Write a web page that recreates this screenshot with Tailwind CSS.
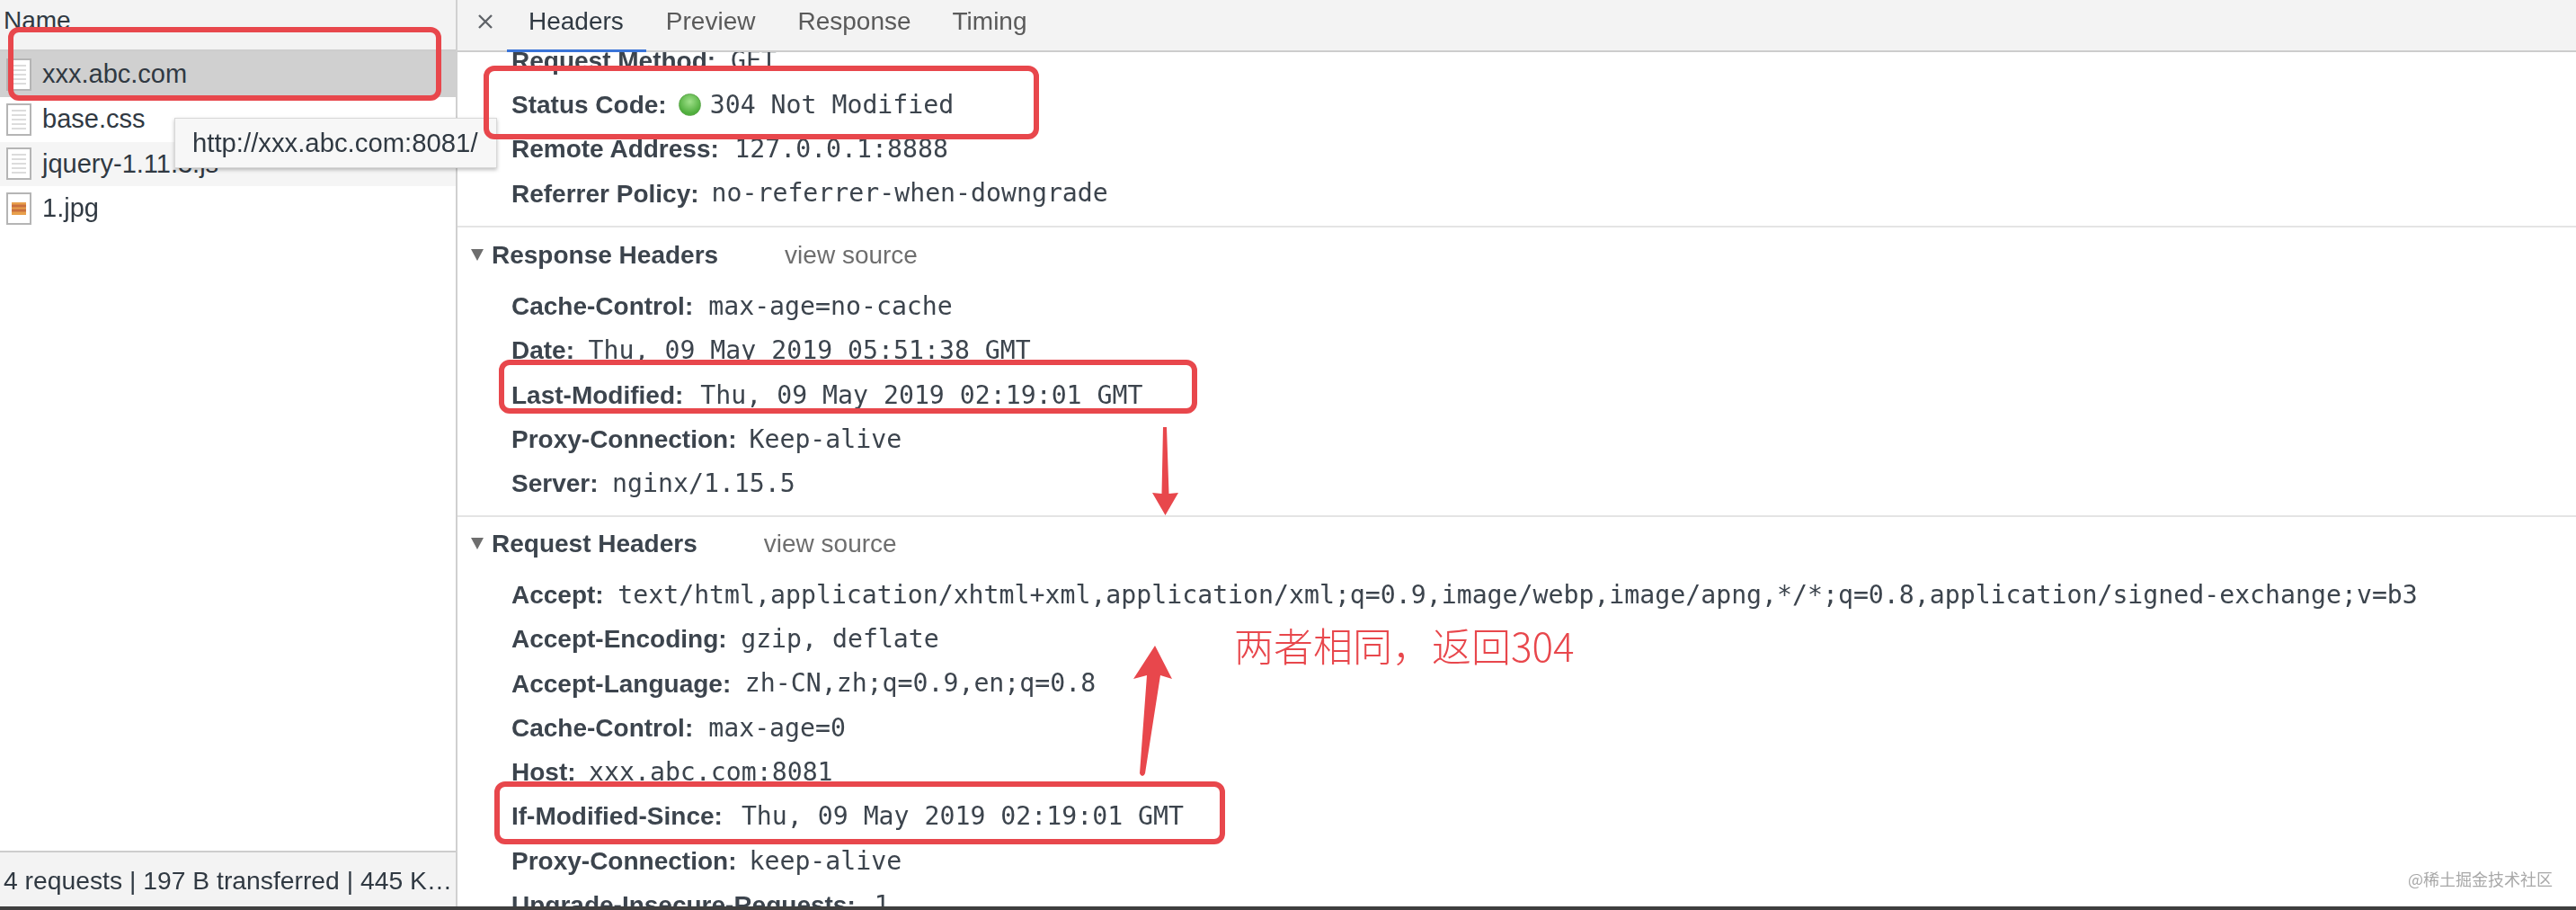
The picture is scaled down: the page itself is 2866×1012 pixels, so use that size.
<!doctype html>
<html lang="zh-CN">
<head>
<meta charset="utf-8">
<script src="https://cdn.jsdelivr.net/npm/@tailwindcss/browser@4"></script>
<title>Network</title>
</head>
<body class="m-0 bg-white">
<div class="relative w-[2866px] h-[1012px] overflow-hidden flex flex-col font-['Liberation_Sans',Arial,sans-serif] text-[28px] text-[#303942]">
  <div class="flex h-[1008px] blur-[0.6px]">
    <!-- left pane -->
    <div class="w-[509px] shrink-0 border-r-2 border-[#d0d0d0] flex flex-col">
      <div class="h-[57px] bg-[#f3f3f3] border-b-2 border-[#cdcdcd] flex items-center pl-[4px] pb-[10px]">Name</div>
      <div class="flex-1 text-[29px]">
        <div class="h-[51px] bg-[#d0d0d0] flex items-center pl-[7px] gap-[12px]">
          <svg class="w-[28px] h-[36px]" viewBox="0 0 28 36"><rect x="1" y="1" width="26" height="34" fill="#fff" stroke="#b5b5b5" stroke-width="2"/><path d="M6 8h16M6 13h16M6 18h16M6 23h16M6 28h16" stroke="#dcdcdc" stroke-width="2"/></svg>
          <span>xxx.abc.com</span>
        </div>
        <div class="h-[49.5px] bg-white flex items-center pl-[7px] gap-[12px]">
          <svg class="w-[28px] h-[36px]" viewBox="0 0 28 36"><rect x="1" y="1" width="26" height="34" fill="#fff" stroke="#b5b5b5" stroke-width="2"/><path d="M6 8h16M6 13h16M6 18h16M6 23h16M6 28h16" stroke="#dcdcdc" stroke-width="2"/></svg>
          <span>base.css</span>
        </div>
        <div class="h-[49.5px] bg-[#f5f5f5] flex items-center pl-[7px] gap-[12px]">
          <svg class="w-[28px] h-[36px]" viewBox="0 0 28 36"><rect x="1" y="1" width="26" height="34" fill="#fff" stroke="#b5b5b5" stroke-width="2"/><path d="M6 8h16M6 13h16M6 18h16M6 23h16M6 28h16" stroke="#dcdcdc" stroke-width="2"/></svg>
          <span>jquery-1.11.3.js</span>
        </div>
        <div class="h-[49.5px] bg-white flex items-center pl-[7px] gap-[12px]">
          <svg class="w-[28px] h-[36px]" viewBox="0 0 28 36"><rect x="1" y="1" width="26" height="34" fill="#fff" stroke="#b5b5b5" stroke-width="2"/><rect x="6" y="11" width="16" height="14" fill="#e8a04c"/><path d="M6 15h16M6 20h16" stroke="#c9703f" stroke-width="3"/></svg>
          <span>1.jpg</span>
        </div>
      </div>
      <div class="h-[62px] bg-[#f3f3f3] border-t-2 border-[#cdcdcd] flex items-center pl-[4px] pt-[2px] text-[28.3px] whitespace-nowrap">4 requests | 197 B transferred | 445 K…</div>
    </div>
    <!-- right pane -->
    <div class="flex-1 min-w-0 flex flex-col">
      <div class="relative h-[58px] shrink-0 bg-[#f3f3f3] border-b-2 border-[#cdcdcd] flex items-center pb-[8px] text-[#5a5a5a]">
        <svg class="ml-[23px] w-[16px] h-[16px]" viewBox="0 0 16 16"><path d="M1 1l14 14M15 1L1 15" stroke="#5f6368" stroke-width="2.4"/></svg>
        <span class="ml-[40px] text-[#303942]">Headers</span>
        <span class="ml-[47px]">Preview</span>
        <span class="ml-[47px]">Response</span>
        <span class="ml-[46px]">Timing</span>
        <div class="absolute left-[55px] bottom-[-2px] w-[155px] h-[3px] bg-[#3a74d8]"></div>
      </div>
      <div class="flex-1 min-h-0 overflow-hidden">
        <div class="-mt-[15px] text-[#3c444d]">
          <section class="pb-[11px] border-b-2 border-[#e4e4e4]">
            <div class="h-[49.3px] pl-[60px] flex items-center whitespace-nowrap"><b>Request Method:</b><span class="ml-[17px] text-[28.2px] font-['DejaVu_Sans_Mono',monospace]">GET</span></div>
            <div class="h-[49.3px] pl-[60px] flex items-center whitespace-nowrap"><b>Status Code:</b><span class="ml-[13px] w-[25px] h-[25px] rounded-full bg-[radial-gradient(circle_at_50%_35%,#9fe08a,#4fae3c_70%)] border border-[#5aa648]"></span><span class="ml-[10px] text-[28.2px] font-['DejaVu_Sans_Mono',monospace]">304 Not Modified</span></div>
            <div class="h-[49.3px] pl-[60px] flex items-center whitespace-nowrap"><b>Remote Address:</b><span class="ml-[17.5px] text-[28.2px] font-['DejaVu_Sans_Mono',monospace]">127.0.0.1:8888</span></div>
            <div class="h-[49.3px] pl-[60px] flex items-center whitespace-nowrap"><b>Referrer Policy:</b><span class="ml-[14px] text-[28.2px] font-['DejaVu_Sans_Mono',monospace]">no-referrer-when-downgrade</span></div>
          </section>
          <section class="pt-[6px] pb-[10px] border-b-2 border-[#e4e4e4]">
            <div class="h-[49.3px] mb-[8px] pl-[15px] flex items-center whitespace-nowrap"><span class="w-0 h-0 border-x-[7px] border-x-transparent border-t-[13px] border-t-[#6e6e6e]"></span><b class="ml-[9px]">Response Headers</b><span class="ml-[74px] text-[#6e6e6e]">view source</span></div>
            <div class="h-[49.3px] pl-[60px] flex items-center whitespace-nowrap"><b>Cache-Control:</b><span class="ml-[17px] text-[28.2px] font-['DejaVu_Sans_Mono',monospace]">max-age=no-cache</span></div>
            <div class="h-[49.3px] pl-[60px] flex items-center whitespace-nowrap"><b>Date:</b><span class="ml-[15.600px] text-[28.2px] font-['DejaVu_Sans_Mono',monospace]">Thu, 09 May 2019 05:51:38 GMT</span></div>
            <div class="h-[49.3px] pl-[60px] flex items-center whitespace-nowrap"><b>Last-Modified:</b><span class="ml-[19px] text-[28.2px] font-['DejaVu_Sans_Mono',monospace]">Thu, 09 May 2019 02:19:01 GMT</span></div>
            <div class="h-[49.3px] pl-[60px] flex items-center whitespace-nowrap"><b>Proxy-Connection:</b><span class="ml-[14px] text-[28.2px] font-['DejaVu_Sans_Mono',monospace]">Keep-alive</span></div>
            <div class="h-[49.3px] pl-[60px] flex items-center whitespace-nowrap"><b>Server:</b><span class="ml-[15.600px] text-[28.2px] font-['DejaVu_Sans_Mono',monospace]">nginx/1.15.5</span></div>
          </section>
          <section class="pt-[5px]">
            <div class="h-[49.3px] mb-[8px] pl-[15px] flex items-center whitespace-nowrap"><span class="w-0 h-0 border-x-[7px] border-x-transparent border-t-[13px] border-t-[#6e6e6e]"></span><b class="ml-[9px]">Request Headers</b><span class="ml-[74px] text-[#6e6e6e]">view source</span></div>
            <div class="h-[49.3px] pl-[60px] flex items-center whitespace-nowrap"><b>Accept:</b><span class="ml-[15.600px] text-[28.2px] font-['DejaVu_Sans_Mono',monospace]">text/html,application/xhtml+xml,application/xml;q=0.9,image/webp,image/apng,*/*;q=0.8,application/signed-exchange;v=b3</span></div>
            <div class="h-[49.3px] pl-[60px] flex items-center whitespace-nowrap"><b>Accept-Encoding:</b><span class="ml-[15.600px] text-[28.2px] font-['DejaVu_Sans_Mono',monospace]">gzip, deflate</span></div>
            <div class="h-[49.3px] pl-[60px] flex items-center whitespace-nowrap"><b>Accept-Language:</b><span class="ml-[15.600px] text-[28.2px] font-['DejaVu_Sans_Mono',monospace]">zh-CN,zh;q=0.9,en;q=0.8</span></div>
            <div class="h-[49.3px] pl-[60px] flex items-center whitespace-nowrap"><b>Cache-Control:</b><span class="ml-[17px] text-[28.2px] font-['DejaVu_Sans_Mono',monospace]">max-age=0</span></div>
            <div class="h-[49.3px] pl-[60px] flex items-center whitespace-nowrap"><b>Host:</b><span class="ml-[14.500px] text-[28.2px] font-['DejaVu_Sans_Mono',monospace]">xxx.abc.com:8081</span></div>
            <div class="h-[49.3px] pl-[60px] flex items-center whitespace-nowrap"><b>If-Modified-Since:</b><span class="ml-[21px] text-[28.2px] font-['DejaVu_Sans_Mono',monospace]">Thu, 09 May 2019 02:19:01 GMT</span></div>
            <div class="h-[49.3px] pl-[60px] flex items-center whitespace-nowrap"><b>Proxy-Connection:</b><span class="ml-[14px] text-[28.2px] font-['DejaVu_Sans_Mono',monospace]">keep-alive</span></div>
            <div class="h-[49.3px] pl-[60px] flex items-center whitespace-nowrap"><b>Upgrade-Insecure-Requests:</b><span class="ml-[21px] text-[28.2px] font-['DejaVu_Sans_Mono',monospace]">1</span></div>
          </section>
        </div>
      </div>
    </div>
  </div>
  <div class="h-[4px] bg-[#3f3f3f]"></div>

  <!-- tooltip -->
  <div class="absolute left-[194px] top-[131px] w-[359px] h-[56px] bg-[#f7f7f7] border border-[#d8d8d8] shadow-[0_2px_4px_rgba(0,0,0,0.25)] flex items-center pl-[19px] text-[29.3px] whitespace-nowrap blur-[0.6px]">http://xxx.abc.com:8081/</div>

  <!-- annotations -->
  <div class="absolute left-[9px] top-[30px] w-[482px] h-[82px] border-[6px] border-[#e8474c] rounded-[12px]"></div>
  <div class="absolute left-[538px] top-[73px] w-[618px] h-[82px] border-[6px] border-[#e8474c] rounded-[12px]"></div>
  <div class="absolute left-[555px] top-[400px] w-[777px] h-[60px] border-[6px] border-[#e8474c] rounded-[12px]"></div>
  <div class="absolute left-[550px] top-[869px] w-[813px] h-[70px] border-[6px] border-[#e8474c] rounded-[12px]"></div>
  <svg class="absolute left-[1250px] top-[470px] w-[70px] h-[110px]" viewBox="0 0 70 110"><path d="M44 5h4l2.500 74 10.500-1-14.500 25-14.500-25 10.500 1z" fill="#e8474c"/></svg>
  <svg class="absolute left-[1250px] top-[710px] w-[70px] h-[160px]" viewBox="0 0 70 160"><path d="M35 8l19 37-13-4-17 109q-1 3-3 3t-3-3l8-109-15 4z" fill="#e8474c"/></svg>
  <div class="absolute left-[1373px] top-[689px] text-[44px] leading-[56px] text-[#e8474c] whitespace-nowrap font-['Noto_Sans_CJK_SC','Noto_Sans',sans-serif] font-light">两者相同，返回304</div>
  <div class="absolute left-[2679px] top-[964px] text-[18px] leading-[26px] text-[#a8a8a8] whitespace-nowrap font-['Noto_Sans_CJK_SC',sans-serif]">@稀土掘金技术社区</div>
</div>
</body>
</html>
